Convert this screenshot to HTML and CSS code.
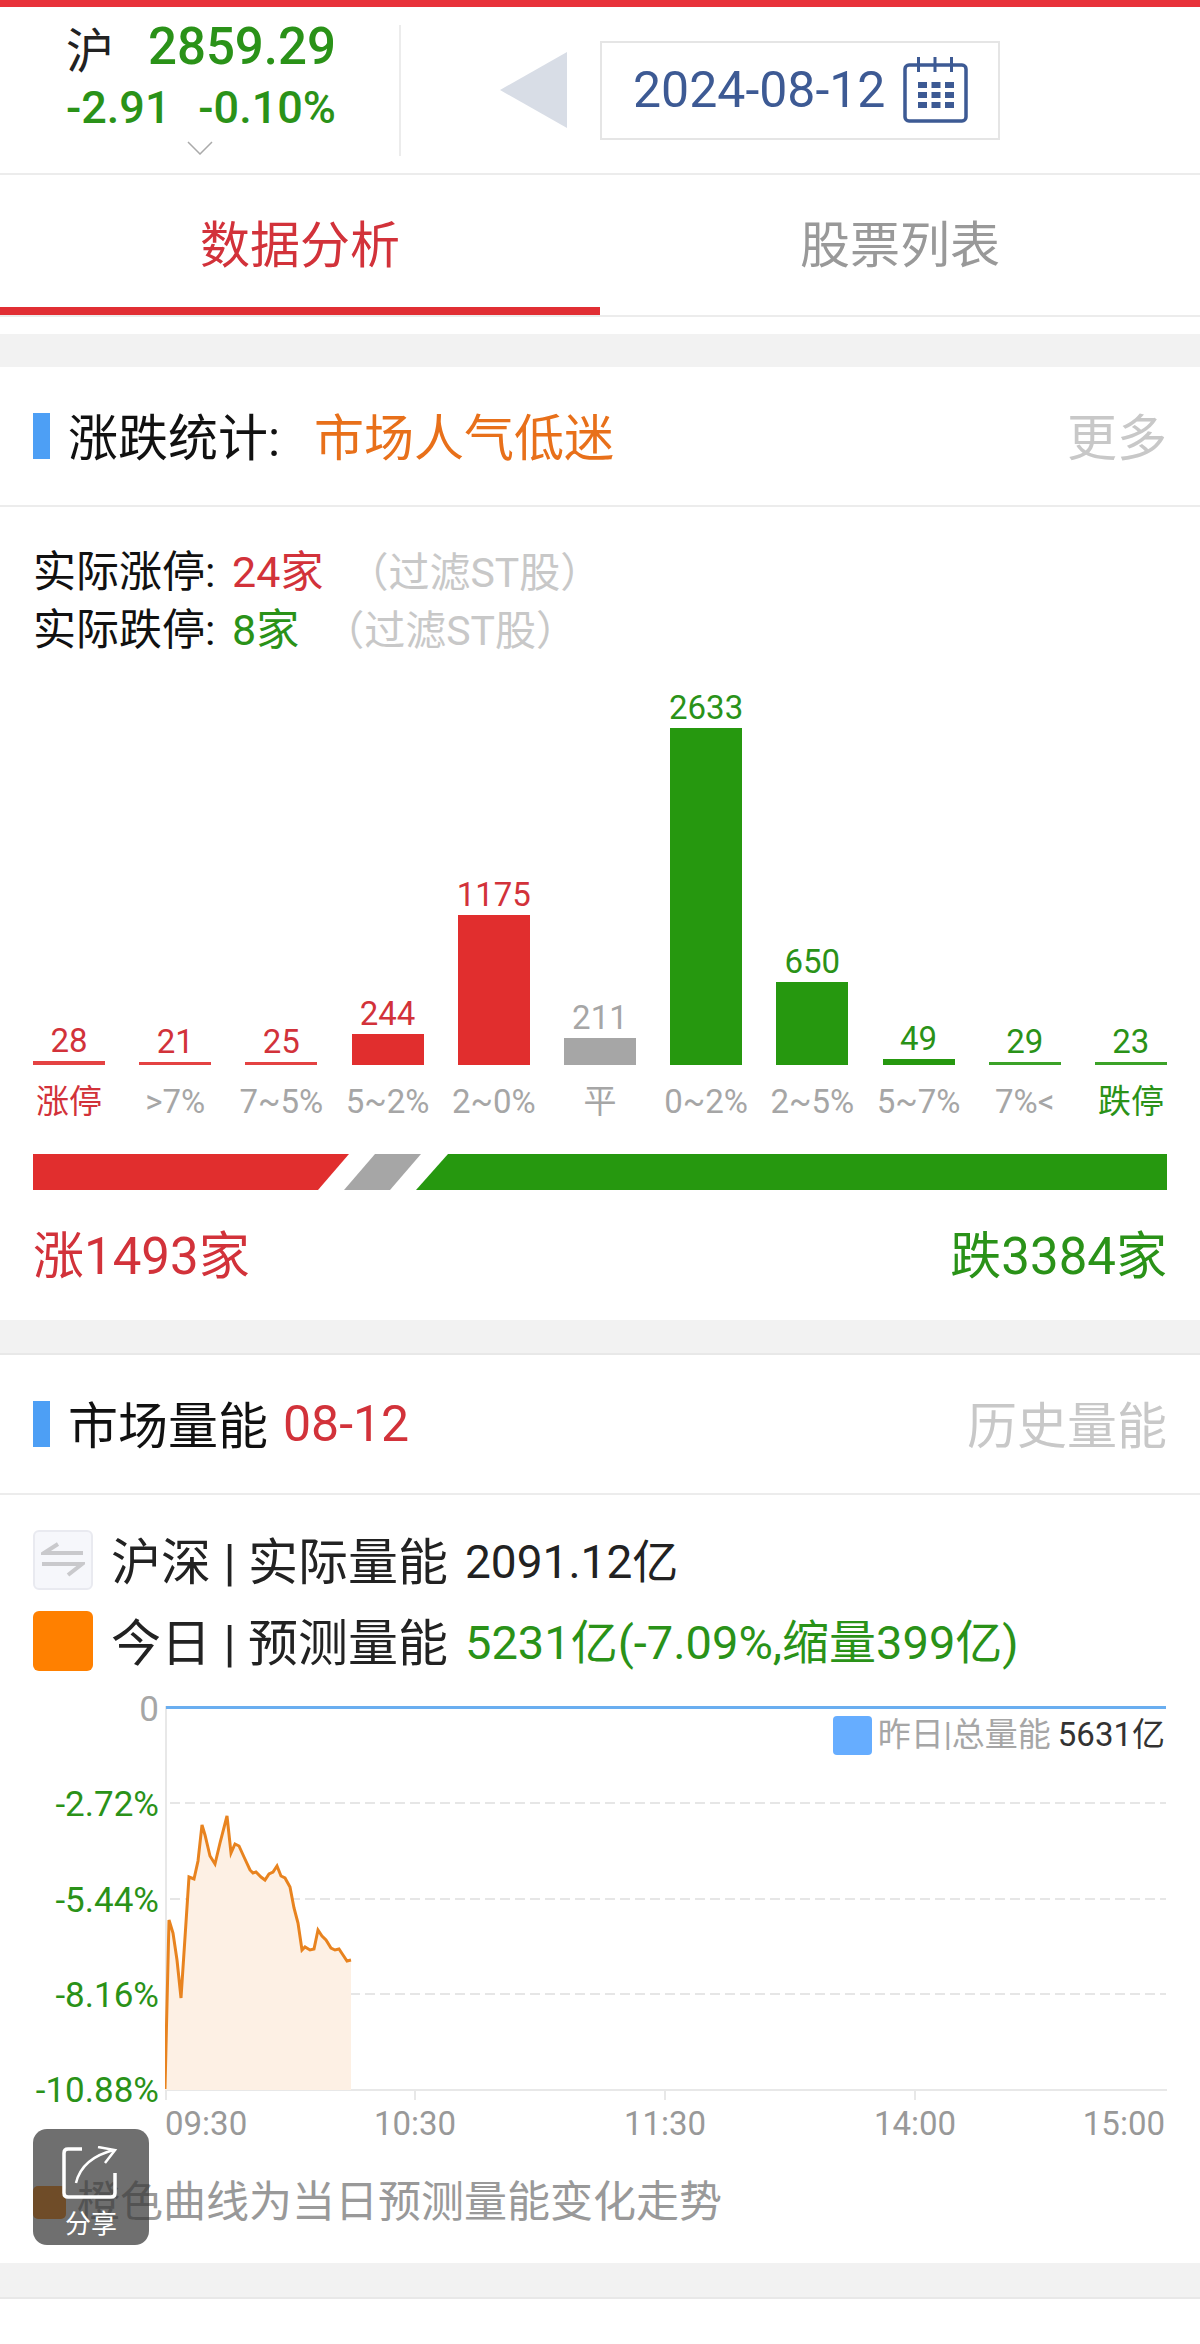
FILE: index.html
```html
<!DOCTYPE html>
<html lang="zh-CN">
  <head>
    <meta charset="UTF-8" />
    <title>数据分析</title>
    <link rel="stylesheet" href="styles.css">
  </head>
  <body>
    <div class="page">
      <div class="top-bar"></div>

      <div class="header">
        <div class="index-box">
          <div class="index-line"><span class="index-name">沪</span><span class="index-price">2859.29</span></div>
          <div class="index-change"><span>-2.91</span><span>-0.10%</span></div>
          <svg class="chevron" width="26" height="14" viewBox="0 0 26 14"><path d="M1 1 L13 13 L25 1" fill="none" stroke="#aaa" stroke-width="1.5"/></svg>
        </div>
        <div class="date-area">
          <div class="prev-arrow"></div>
          <div class="date-box">
            <span class="date-text">2024-08-12</span>
            <svg width="66" height="66" viewBox="0 0 66 66">
              <rect x="2" y="8" width="61" height="56" rx="4" fill="none" stroke="#3d5a94" stroke-width="3.5"/>
              <path d="M15.5 0 V15 M32 0 V15 M48.5 0 V15" stroke="#3d5a94" stroke-width="3"/>
              <path d="M15 28 h9 M28.5 28 h9 M42 28 h9 M15 38 h9 M28.5 38 h9 M42 38 h9 M15 48 h9 M28.5 48 h9 M42 48 h9" stroke="#3d5a94" stroke-width="6"/>
            </svg>
          </div>
        </div>
      </div>

      <div class="tabs">
        <div class="tab active">数据分析</div>
        <div class="tab">股票列表</div>
      </div>

      <div class="band"></div>

      <div class="section-head">
        <div class="head-left">
          <i class="mark"></i>
          <span class="head-title">涨跌统计:</span>
          <span class="head-mood">市场人气低迷</span>
        </div>
        <span class="head-more">更多</span>
      </div>

      <div class="stats">
        <div class="limit-row">实际涨停: <span class="red num-gap">24家</span><span class="hint">（过滤ST股）</span></div>
        <div class="limit-row">实际跌停: <span class="green num-gap">8家</span><span class="hint">（过滤ST股）</span></div>

        <div class="bars">
          <div class="col red"><span class="val">28</span><div class="bar bg-red thin-bar" style="height: 4px"></div><span class="lbl">涨停</span></div>
          <div class="col red"><span class="val">21</span><div class="bar bg-red thin-bar" style="height: 3px"></div><span class="lbl gray">&gt;7%</span></div>
          <div class="col red"><span class="val">25</span><div class="bar bg-red thin-bar" style="height: 3px"></div><span class="lbl gray">7~5%</span></div>
          <div class="col red"><span class="val">244</span><div class="bar bg-red" style="height: 31px"></div><span class="lbl gray">5~2%</span></div>
          <div class="col red"><span class="val">1175</span><div class="bar bg-red" style="height: 150px"></div><span class="lbl gray">2~0%</span></div>
          <div class="col gray"><span class="val">211</span><div class="bar bg-gray" style="height: 27px"></div><span class="lbl gray">平</span></div>
          <div class="col green"><span class="val">2633</span><div class="bar bg-green" style="height: 337px"></div><span class="lbl gray">0~2%</span></div>
          <div class="col green"><span class="val">650</span><div class="bar bg-green" style="height: 83px"></div><span class="lbl gray">2~5%</span></div>
          <div class="col green"><span class="val">49</span><div class="bar bg-green" style="height: 6px"></div><span class="lbl gray">5~7%</span></div>
          <div class="col green"><span class="val">29</span><div class="bar bg-green thin-bar" style="height: 3px"></div><span class="lbl gray">7%&lt;</span></div>
          <div class="col green"><span class="val">23</span><div class="bar bg-green thin-bar" style="height: 3px"></div><span class="lbl">跌停</span></div>
        </div>

        <svg class="ratio" width="1134" height="36" viewBox="0 0 1134 36">
          <polygon points="0,0 316,0 285,36 0,36" fill="#e12e2e"/>
          <polygon points="342,0 388,0 357,36 311,36" fill="#a6a6a6"/>
          <polygon points="415,0 1134,0 1134,36 383,36" fill="#26980f"/>
        </svg>

        <div class="totals">
          <span class="red">涨1493家</span>
          <span class="green">跌3384家</span>
        </div>
      </div>

      <div class="band band-line"></div>

      <div class="section-head">
        <div class="head-left">
          <i class="mark"></i>
          <span class="head-title">市场量能</span>
          <span class="head-date">08-12</span>
        </div>
        <span class="head-more">历史量能</span>
      </div>

      <div class="energy">
        <div class="energy-row">
          <span class="swap-box">
            <svg width="44" height="36" viewBox="0 0 44 36"><path d="M17 2 L3 11 H42 M1 22 H41 L27 33" fill="none" stroke="#c9c9cc" stroke-width="4"/></svg>
          </span>
          <span class="energy-label">沪深 | 实际量能</span>
          <span class="energy-value">2091.12亿</span>
        </div>
        <div class="energy-row">
          <span class="orange-box"></span>
          <span class="energy-label">今日 | 预测量能</span>
          <span class="energy-value forecast green">5231亿(-7.09%,缩量399亿)</span>
        </div>

        <div class="chart">
          <div class="y-axis">
            <span class="gray">0</span>
            <span>-2.72%</span>
            <span>-5.44%</span>
            <span>-8.16%</span>
            <span>-10.88%</span>
          </div>
          <div class="plot">
            <svg width="1002" height="396" viewBox="0 0 1002 396">
              <path d="M1 0 V394 M0 384 H1002" stroke="#e8e8e8" stroke-width="2" fill="none"/>
              <path d="M5 97 H1001 M5 193 H1001 M5 288 H1001" stroke="#e6e6e6" stroke-width="2" stroke-dasharray="10 5" fill="none"/>
              <path d="M250 384 V394 M500 384 V394 M750 384 V394" stroke="#e8e8e8" stroke-width="2"/>
              <path d="M1 1.5 H1001" stroke="#6aaef0" stroke-width="3"/>
              <path class="area" d="M0 383 L4 214 L8 227 L12 254 L16 292 L24 171 L29 173 L33 155 L37 119 L40 129 L45 150 L50 158 L55 137 L62 110 L66 147 L70 138 L74 140 L79 151 L85 164 L88 167 L91 166 L96 171 L100 174 L104 168 L108 166 L112 160 L116 170 L120 172 L125 181 L129 202 L133 217 L137 244 L140 241 L145 244 L149 243 L153 224 L157 230 L161 234 L166 242 L170 244 L174 243 L178 249 L182 255 L186 254 V384 H0 Z"/>
              <path class="line" d="M0 383 L4 214 L8 227 L12 254 L16 292 L24 171 L29 173 L33 155 L37 119 L40 129 L45 150 L50 158 L55 137 L62 110 L66 147 L70 138 L74 140 L79 151 L85 164 L88 167 L91 166 L96 171 L100 174 L104 168 L108 166 L112 160 L116 170 L120 172 L125 181 L129 202 L133 217 L137 244 L140 241 L145 244 L149 243 L153 224 L157 230 L161 234 L166 242 L170 244 L174 243 L178 249 L182 255 L186 254"/>
            </svg>
            <div class="legend">
              <i class="legend-box"></i>
              <span class="gray">昨日|总量能</span>
              <span class="legend-num">5631亿</span>
            </div>
            <div class="x-axis">
              <span class="x-first">09:30</span><span>10:30</span><span>11:30</span><span>14:00</span><span class="x-last">15:00</span>
            </div>
          </div>
        </div>

        <div class="note">
          <i class="note-box"></i>
          <span>橙色曲线为当日预测量能变化走势</span>
        </div>

        <div class="share">
          <svg width="60" height="54" viewBox="0 0 60 54">
            <path d="M21 3 H7 Q3 3 3 7 V47 Q3 51 7 51 H50 Q54 51 54 47 V27" fill="none" stroke="#fff" stroke-width="3.5"/>
            <path d="M15 37 Q21 12 53 4 M37 1 L54 4 L44 17" fill="none" stroke="#fff" stroke-width="2.5"/>
          </svg>
          <span>分享</span>
        </div>
      </div>

      <div class="band band-line bottom-band"></div>
    </div>
  </body>
</html>
```

FILE: styles.css
```css
html,
body {
  margin: 0;
  padding: 0;
  background: #fff;
}
body {
  font-family: Roboto, "Noto Sans CJK SC", sans-serif;
  color: #222;
}
.page {
  width: 1200px;
  height: 2344px;
  overflow: hidden;
}
.top-bar {
  height: 7px;
  background: #e8323a;
}
.red {
  color: #d2323a;
}
.green {
  color: #2a9218;
}
.gray {
  color: #a6a6a6;
}
.bg-red {
  background: #e12e2e;
}
.bg-green {
  background: #26980f;
}
.bg-gray {
  background: #a6a6a6;
}

/* header */
.header {
  height: 166px;
  display: flex;
  align-items: center;
  border-bottom: 2px solid #ececec;
}
.index-box {
  width: 401px;
  height: 131px;
  padding-left: 66px;
  border-right: 2px solid #ececec;
  box-sizing: border-box;
  position: relative;
}
.index-line {
  display: flex;
  align-items: center;
  height: 48px;
  margin-top: -2px;
  width: 270px;
}
.index-name {
  font-size: 48px;
  width: 83px;
}
.index-price {
  font-size: 51px;
  font-weight: 500;
  color: #2a9218;
}
.index-change {
  display: flex;
  justify-content: space-between;
  width: 270px;
  margin-top: 13px;
  font-size: 45px;
  font-weight: 500;
  line-height: 48px;
  color: #2a9218;
}
.chevron {
  position: absolute;
  left: 187px;
  top: 116px;
}
.date-area {
  display: flex;
  align-items: center;
  margin-left: 99px;
}
.prev-arrow {
  width: 0;
  height: 0;
  border-top: 38px solid transparent;
  border-bottom: 38px solid transparent;
  border-right: 67px solid #d8dde6;
  margin-right: 33px;
}
.date-box {
  width: 400px;
  height: 99px;
  border: 2px solid #e5e5e5;
  box-sizing: border-box;
  display: flex;
  align-items: center;
  padding-left: 31px;
  gap: 18px;
  color: #3d5a94;
}
.date-text {
  font-size: 50px;
  white-space: nowrap;
}

/* tabs */
.tabs {
  display: flex;
  height: 140px;
  border-bottom: 2px solid #ececec;
}
.tab {
  width: 600px;
  height: 140px;
  line-height: 142px;
  text-align: center;
  font-size: 50px;
  color: #999;
  box-sizing: border-box;
}
.tab.active {
  color: #d2323a;
  border-bottom: 8px solid #e12e34;
}
.band {
  height: 33px;
  margin-top: 17px;
  background: #f2f2f2;
}
.band-line {
  margin-top: 0;
  border-bottom: 2px solid #e8e8e8;
}

/* section title */
.section-head {
  height: 138px;
  padding: 0 33px;
  display: flex;
  align-items: center;
  justify-content: space-between;
  border-bottom: 2px solid #ececec;
}
.head-left {
  display: flex;
  align-items: center;
}
.mark {
  display: block;
  width: 17px;
  height: 46px;
  margin-right: 18px;
  background: #4d9ff5;
}
.head-title {
  font-size: 50px;
  color: #111;
  margin-top: -4px;
}
.head-mood {
  font-size: 50px;
  color: #e8701a;
  margin-left: 34px;
  margin-top: -4px;
}
.head-date {
  font-size: 50px;
  color: #d2323a;
  margin-left: 15px;
}
.head-more {
  font-size: 50px;
  color: #c8c8c8;
  margin-top: -4px;
}

/* up and down stats */
.stats {
  height: 813px;
  padding: 37px 33px 0;
  box-sizing: border-box;
}
.limit-row {
  font-size: 43px;
  line-height: 57px;
  color: #111;
  white-space: nowrap;
}
.num-gap {
  margin-left: 6px;
}
.hint {
  color: #c8c8c8;
  font-size: 41px;
  margin-left: 24px;
}
.bars {
  display: flex;
  justify-content: space-between;
  align-items: flex-end;
  height: 400px;
  margin-top: 62px;
  width: 1134px;
}
.col {
  width: 72px;
  display: flex;
  flex-direction: column;
  align-items: center;
}
.bar {
  width: 72px;
}
.thin-bar {
  opacity: 0.9;
}
.val {
  font-size: 33px;
  line-height: 38px;
  margin-bottom: 1px;
}
.lbl {
  font-size: 33px;
  line-height: 40px;
  margin-top: 17px;
  white-space: nowrap;
}
.ratio {
  display: block;
  margin-top: 32px;
}
.totals {
  display: flex;
  justify-content: space-between;
  margin-top: 37px;
  font-size: 51px;
  line-height: 60px;
}

/* market energy */
.energy {
  position: relative;
  height: 768px;
  padding: 35px 33px 0;
  box-sizing: border-box;
}
.energy-row {
  display: flex;
  align-items: center;
  height: 60px;
  margin-bottom: 21px;
  font-size: 50px;
}
.swap-box,
.orange-box {
  width: 60px;
  height: 60px;
  border-radius: 6px;
  margin-right: 18px;
  box-sizing: border-box;
}
.swap-box {
  display: flex;
  align-items: center;
  justify-content: center;
  background: #f6f7fb;
  border: 2px solid #e9eaf0;
}
.orange-box {
  background: #ff8000;
}
.energy-label {
  color: #222;
  margin-top: -5px;
}
.energy-value {
  margin-left: 17px;
  margin-top: -5px;
  font-size: 46px;
}
.forecast {
  font-size: 47px;
}
.chart {
  display: flex;
  padding-top: 14px;
}
.y-axis {
  width: 127px;
  height: 421px;
  display: flex;
  flex-direction: column;
  justify-content: space-between;
  align-items: flex-end;
  font-size: 35px;
  line-height: 40px;
  color: #2a9218;
  margin-top: -16px;
}
.plot {
  position: relative;
  margin-left: 6px;
  width: 1002px;
}
.plot svg {
  display: block;
}
.area {
  fill: #fdf0e4;
}
.line {
  fill: none;
  stroke: #e8831f;
  stroke-width: 3;
}
.legend {
  position: absolute;
  right: 2px;
  top: 9px;
  display: flex;
  align-items: center;
  font-size: 33px;
  line-height: 40px;
  white-space: nowrap;
}
.legend-box {
  display: block;
  width: 39px;
  height: 39px;
  border-radius: 4px;
  background: #66adff;
  margin-right: 6px;
}
.legend-num {
  color: #333;
  margin-left: 7px;
}
.x-axis {
  display: grid;
  grid-template-columns: 125px 250px 250px 250px 125px;
  text-align: center;
  font-size: 33px;
  line-height: 40px;
  color: #999;
  margin-top: 2px;
}
.x-first {
  text-align: left;
}
.x-last {
  text-align: right;
}
.note {
  display: flex;
  align-items: center;
  margin-top: 28px;
  font-size: 43px;
  line-height: 60px;
  color: #999;
}
.note-box {
  display: block;
  width: 33px;
  height: 33px;
  border-radius: 5px;
  margin-right: 11px;
  background: #ff8000;
}
.share {
  position: absolute;
  left: 33px;
  top: 634px;
  width: 116px;
  height: 116px;
  border-radius: 14px;
  background: rgba(55, 55, 55, 0.72);
  color: #fff;
  display: flex;
  flex-direction: column;
  align-items: center;
  gap: 8px;
  padding-top: 17px;
  box-sizing: border-box;
  font-size: 26px;
  line-height: 32px;
}
.bottom-band {
  height: 34px;
}
```
